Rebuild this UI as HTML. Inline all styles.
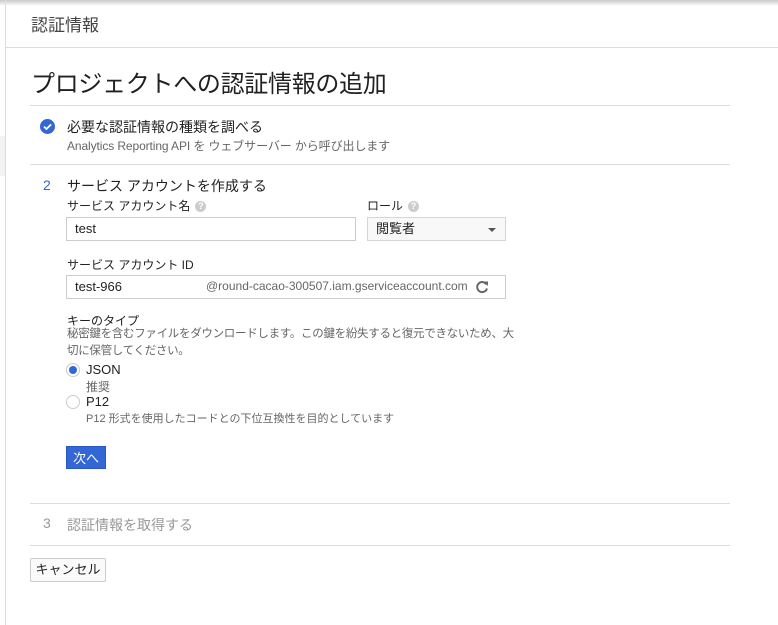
<!DOCTYPE html>
<html><head><meta charset="utf-8"><style>
*{margin:0;padding:0;box-sizing:border-box}
body{width:778px;height:625px;background:#fff;position:relative;overflow:hidden;font-family:"Liberation Sans","Noto Sans CJK JP",sans-serif;color:#222}
.a{position:absolute;white-space:nowrap}
.hr{position:absolute;height:1px;background:#ddd}
.inp{position:absolute;border:1px solid #ccc;background:#fff;font-size:13px;padding-left:8px;line-height:21px}
.lbl{font-size:12px;color:#222}
.q{display:inline-block;width:11px;height:11px;border-radius:50%;background:#ccc;color:#fff;font-size:9px;line-height:11px;text-align:center;vertical-align:middle;margin-left:5px;font-weight:bold}
</style></head><body>
<div style="position:absolute;left:0;top:0;width:778px;height:6px;background:linear-gradient(#c8c8c8,#fff)"></div>
<div style="position:absolute;left:5px;top:0;width:1px;height:625px;background:#ddd"></div>
<div style="position:absolute;left:0;top:136px;width:5px;height:40px;background:#f2f3f5"></div>
<div class="a" style="left:31px;top:11px;font-size:17px;color:#444">認証情報</div>
<div class="hr" style="left:6px;top:47px;width:772px"></div>
<div class="a" style="left:31px;top:64px;font-size:24px;color:#212121;letter-spacing:-0.3px">プロジェクトへの認証情報の追加</div>
<div class="hr" style="left:30px;top:105px;width:700px"></div>
<svg class="a" style="left:40px;top:119px" width="15" height="15" viewBox="0 0 15 15"><circle cx="7.5" cy="7.5" r="7.5" fill="#3367d6"/><path d="M4 7.6l2.5 2.4 4.6-4.6" stroke="#fff" stroke-width="1.8" fill="none"/></svg>
<div class="a" style="left:67px;top:117px;font-size:14px">必要な認証情報の種類を調べる</div>
<div class="a" style="left:67px;top:137px;font-size:12px;color:#666;letter-spacing:-0.1px">Analytics Reporting API を ウェブサーバー から呼び出します</div>
<div class="hr" style="left:30px;top:164px;width:700px"></div>
<div class="a" style="left:43px;top:177px;font-size:14px;color:#3367d6">2</div>
<div class="a" style="left:67px;top:176px;font-size:14px">サービス アカウントを作成する</div>
<div class="a lbl" style="left:67px;top:197px">サービス アカウント名<span class="q">?</span></div>
<div class="a lbl" style="left:367px;top:197px">ロール<span class="q">?</span></div>
<div class="inp" style="left:66px;top:217px;width:290px;height:24px">test</div>
<div class="inp" style="left:367px;top:217px;width:139px;height:24px;background:#f8f8f8;border-color:#d5d5d5">閲覧者<span style="position:absolute;right:9px;top:10px;border-left:4px solid transparent;border-right:4px solid transparent;border-top:4px solid #555"></span></div>
<div class="a lbl" style="left:67px;top:256px">サービス アカウント ID</div>
<div class="inp" style="left:66px;top:275px;width:440px;height:24px">test-966<span style="position:absolute;left:139px;color:#666;font-size:12px">@round-cacao-300507.iam.gserviceaccount.com</span>
<svg style="position:absolute;right:16px;top:4px" width="14" height="14" viewBox="0 0 14 14"><path d="M11.5 4.5A5 5 0 1 0 12 8.5" stroke="#666" stroke-width="2" fill="none"/><path d="M8.5 1.5h4.5v4.5z" fill="#666"/></svg></div>
<div class="a lbl" style="left:67px;top:312px">キーのタイプ</div>
<div class="a" style="left:67px;top:326px;font-size:11.5px;color:#666;line-height:17px;letter-spacing:-0.3px">秘密鍵を含むファイルをダウンロードします。この鍵を紛失すると復元できないため、大<br>切に保管してください。</div>
<div class="a" style="left:66px;top:363px;width:14px;height:14px;border:1px solid #ccc;border-radius:50%"><div style="margin:2px;width:8px;height:8px;border-radius:50%;background:#3367d6"></div></div>
<div class="a" style="left:86px;top:362px;font-size:13px">JSON</div>
<div class="a" style="left:86px;top:378px;font-size:12px;color:#666">推奨</div>
<div class="a" style="left:66px;top:395px;width:14px;height:14px;border:1px solid #ccc;border-radius:50%"></div>
<div class="a" style="left:86px;top:394px;font-size:13px">P12</div>
<div class="a" style="left:86px;top:410px;font-size:11px;color:#666">P12 形式を使用したコードとの下位互換性を目的としています</div>
<div class="a" style="left:66px;top:446px;width:40px;height:23px;background:#3367d6;color:#fff;font-size:13px;line-height:23px;text-align:center;border:1px solid #2a56c6">次へ</div>
<div class="hr" style="left:30px;top:503px;width:700px"></div>
<div class="a" style="left:43px;top:515px;font-size:14px;color:#999">3</div>
<div class="a" style="left:67px;top:515px;font-size:14px;color:#999">認証情報を取得する</div>
<div class="hr" style="left:30px;top:545px;width:700px"></div>
<div class="a" style="left:30px;top:558px;width:76px;height:24px;border:1px solid #ccc;border-radius:2px;background:#fafafa;font-size:13px;line-height:22px;text-align:center">キャンセル</div>
</body></html>
